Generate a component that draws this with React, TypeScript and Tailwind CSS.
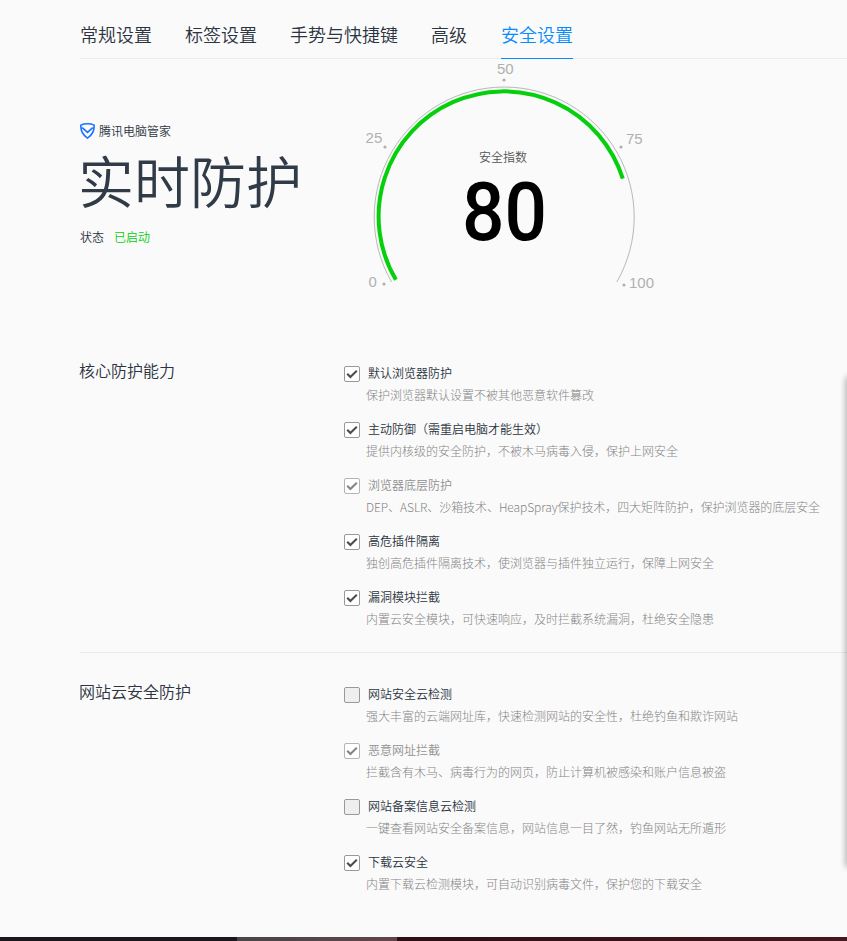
import clsx from "clsx";

type Option = {
  title: string;
  desc: string;
  checked: boolean;
  disabled?: boolean;
  tight?: boolean;
};

const tabs = ["常规设置", "标签设置", "手势与快捷键", "高级", "安全设置"];

const coreOptions: Option[] = [
  { title: "默认浏览器防护", desc: "保护浏览器默认设置不被其他恶意软件篡改", checked: true },
  { title: "主动防御（需重启电脑才能生效）", desc: "提供内核级的安全防护，不被木马病毒入侵，保护上网安全", checked: true },
  {
    title: "浏览器底层防护",
    desc: "DEP、ASLR、沙箱技术、HeapSpray保护技术，四大矩阵防护，保护浏览器的底层安全",
    checked: true,
    disabled: true,
    tight: true,
  },
  { title: "高危插件隔离", desc: "独创高危插件隔离技术，使浏览器与插件独立运行，保障上网安全", checked: true },
  { title: "漏洞模块拦截", desc: "内置云安全模块，可快速响应，及时拦截系统漏洞，杜绝安全隐患", checked: true },
];

const cloudOptions: Option[] = [
  { title: "网站安全云检测", desc: "强大丰富的云端网址库，快速检测网站的安全性，杜绝钓鱼和欺诈网站", checked: false },
  { title: "恶意网址拦截", desc: "拦截含有木马、病毒行为的网页，防止计算机被感染和账户信息被盗", checked: true, disabled: true },
  { title: "网站备案信息云检测", desc: "一键查看网站安全备案信息，网站信息一目了然，钓鱼网站无所遁形", checked: false },
  { title: "下载云安全", desc: "内置下载云检测模块，可自动识别病毒文件，保护您的下载安全", checked: true },
];

const Checkbox = ({ checked, disabled }: { checked: boolean; disabled?: boolean }) => (
  <span
    className={clsx(
      "flex h-4 w-4 shrink-0 items-center justify-center rounded-[2px] border",
      disabled ? "border-[#b4b4b4]" : "border-[#999999]",
      checked ? "bg-white" : "bg-[#efefef]"
    )}
  >
    {checked && (
      <svg width="14" height="14" viewBox="0 0 14 14" fill="none">
        <path d="M2.2 6.8 L5.4 10 L11.8 3.8" stroke={disabled ? "#858585" : "#4b4b4b"} strokeWidth="2.1" />
      </svg>
    )}
  </span>
);

const OptionRow = ({ title, desc, checked, disabled, tight }: Option) => (
  <div className="h-14">
    <div className="flex h-4 items-center gap-2">
      <Checkbox checked={checked} disabled={disabled} />
      <span
        className={clsx(
          "-mt-0.5 whitespace-nowrap text-xs leading-4 font-[350]",
          disabled ? "text-[#909090]" : "text-[#2b3440]"
        )}
      >
        {title}
      </span>
    </div>
    <p
      className={clsx(
        "mt-[5px] whitespace-nowrap pl-[22px] text-xs leading-4 font-light text-[#858585]",
        tight && "tracking-[-0.07px]"
      )}
    >
      {desc}
    </p>
  </div>
);

const Gauge = () => (
  <svg width="300" height="240" viewBox="360 60 300 240" fill="none">
    <path d="M391.6 282 A130 130 0 1 1 616.8 282" stroke="#b8b8b8" strokeWidth="1" />
    <path d="M395.9 279.8 A125 125 0 1 1 622.8 178.7" stroke="#06d00c" strokeWidth="4" />
    <g fill="#b0b0b0">
      <circle cx="384" cy="284" r="1.6" />
      <circle cx="385" cy="147" r="1.6" />
      <circle cx="504" cy="80" r="1.6" />
      <circle cx="621" cy="147" r="1.6" />
      <circle cx="624" cy="285" r="1.6" />
    </g>
    <g className="font-['Liberation_Sans'] text-[15px]" fill="#b0b0b0">
      <text x="368.6" y="287">0</text>
      <text x="365.6" y="143">25</text>
      <text x="497" y="74">50</text>
      <text x="626" y="144">75</text>
      <text x="629" y="288">100</text>
    </g>
    <text x="479" y="162" fill="#555555" className="text-xs font-[350]">
      安全指数
    </text>
    <text
      x="462"
      y="240"
      textLength="85"
      lengthAdjust="spacingAndGlyphs"
      fill="#000000"
      className="font-['Roboto'] text-[81px] font-medium"
    >
      80
    </text>
  </svg>
);

const Section = ({ name, options }: { name: string; options: Option[] }) => (
  <section className="flex">
    <h2 className="-mt-1 w-[264px] shrink-0 text-base leading-4 font-[350] text-[#2b3440]">
      <span className="-ml-px">{name}</span>
    </h2>
    <div>
      {options.map((option) => (
        <OptionRow key={option.title} {...option} />
      ))}
    </div>
  </section>
);

const App = () => {
  return (
    <div className="relative flex h-[941px] w-[847px] flex-col overflow-hidden bg-[#fafafa] font-['Noto_Sans_CJK_SC',sans-serif] text-[#2b3440]">
      <main className="flex-1 pl-20">
        <nav className="flex h-[59px] items-end gap-[33px] border-b border-[#ebebeb]">
          {tabs.map((tab) => (
            <a
              key={tab}
              className={clsx(
                "-mb-px h-[37px] whitespace-nowrap border-b text-lg leading-6 font-[350]",
                tab === "安全设置" ? "ml-px border-[#078cff] text-[#078cff]" : "border-transparent"
              )}
            >
              {tab}
            </a>
          ))}
        </nav>

        <div className="flex h-[307px]">
          <div className="w-[280px] pt-16">
            <div className="flex h-4 items-center gap-1 text-xs leading-4 font-[350]">
              <svg width="15" height="16" viewBox="0 0 15 16" fill="none" stroke="#1a73ff" strokeWidth="1.6">
                <path d="M7.5 .8 C10 .8 12.6 1.3 14.1 2.1 C14.5 7.5 12.2 12 7.5 15.1 C2.8 12 .5 7.5 .9 2.1 C2.4 1.3 5 .8 7.5 .8Z" />
                <path d="M2.2 4.7 L7.5 9.4 L12.8 4.7" />
              </svg>
              <span>腾讯电脑管家</span>
            </div>
            <h1 className="-ml-0.5 mt-[5px] h-[70px] whitespace-nowrap text-[56px] leading-[70px] font-[350] text-[#303b47]">
              实时防护
            </h1>
            <p className="mt-[15px] flex gap-2.5 text-xs leading-4 font-[350]">
              <span>状态</span>
              <span className="text-[#06d00c]">已启动</span>
            </p>
          </div>
          <div className="pt-px">
            <Gauge />
          </div>
        </div>

        <Section name="核心防护能力" options={coreOptions} />
        <hr className="mt-1.5 mb-[34px] border-[#ebebeb]" />
        <Section name="网站云安全防护" options={cloudOptions} />
      </main>

      {/* edge shadow of the neighbouring window */}
      <div className="absolute top-[378px] -right-1 h-[488px] w-1 shadow-[0_0_6px_1px_rgba(0,0,0,0.35)]" />

      <footer className="flex h-1 shrink-0">
        <div className="w-[237px] bg-[#1b171c]" />
        <div className="w-40 bg-linear-to-r from-[#484548] to-[#62444a]" />
        <div className="flex-1 bg-linear-to-r from-[#2a1014] to-[#45171e]" />
      </footer>
    </div>
  );
};

export default App;
